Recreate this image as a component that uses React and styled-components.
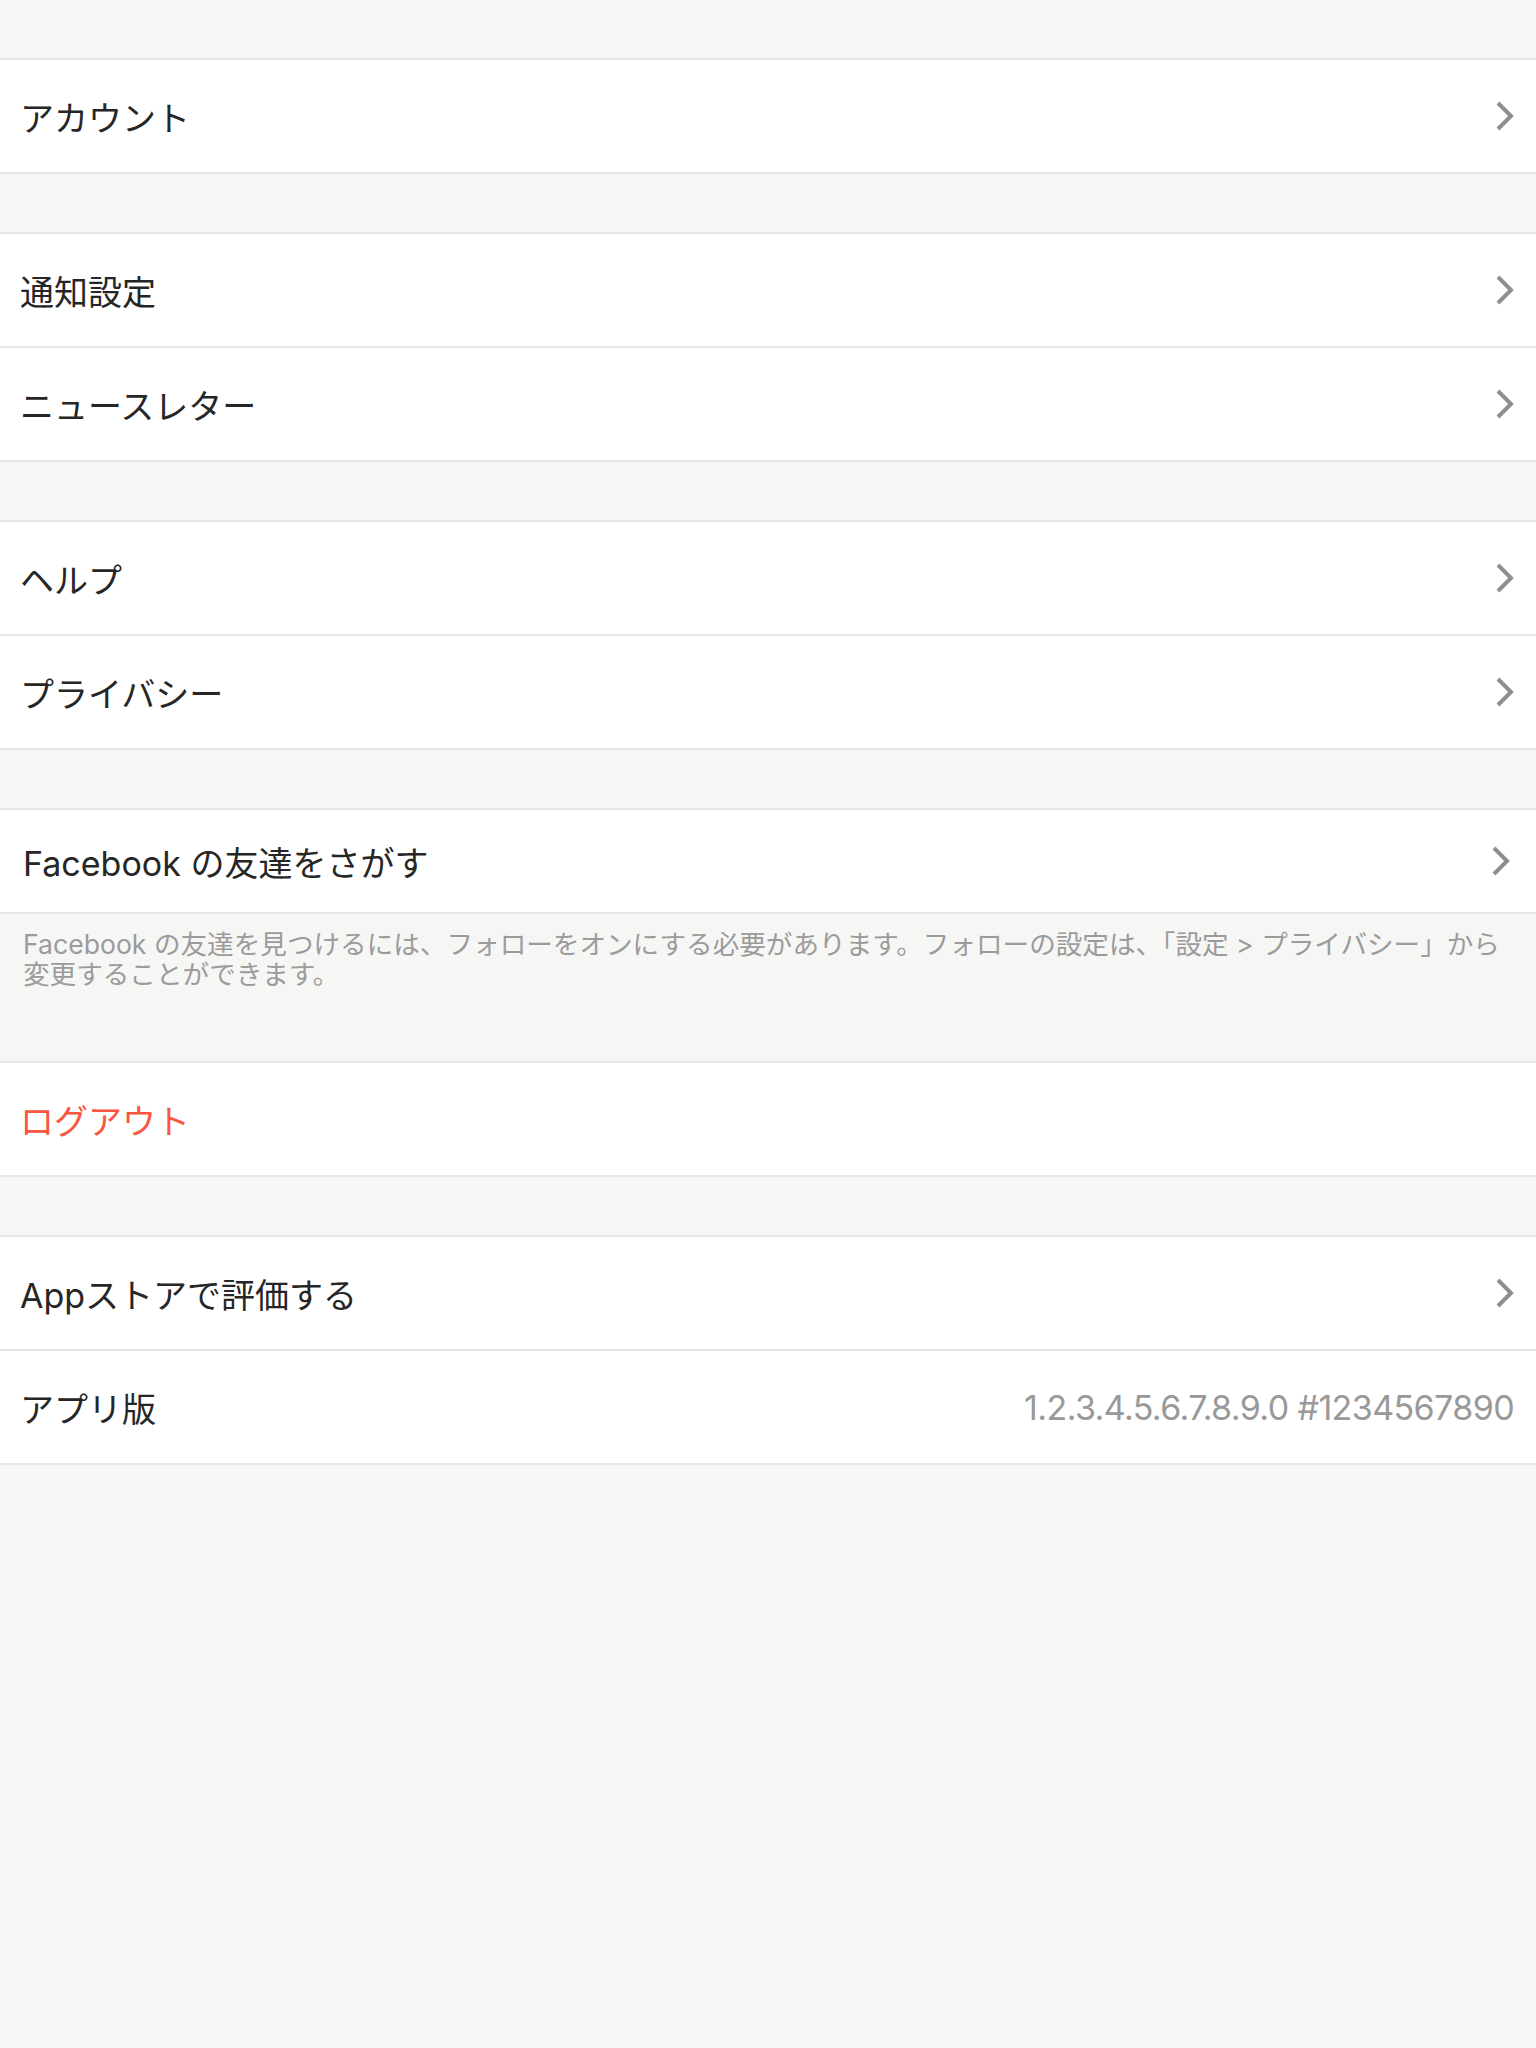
import React from "react";
import styled, { createGlobalStyle } from "styled-components";

const GlobalStyle = createGlobalStyle`
  body {
    margin: 0;
    background-color: #f6f6f4;
    font-family: "Inter", "Noto Sans CJK JP", sans-serif;
    color: #262626;
  }
`;

const Page = styled.div`
  min-height: 2048px;
  padding-top: 58px;
  box-sizing: border-box;
  background-color: #f6f6f4;
`;

const Group = styled.section`
  background-color: #ffffff;
  border-top: 2px solid #e6e6e6;
  border-bottom: 2px solid #e6e6e6;
  margin-bottom: ${props => (props.$flush ? "0" : "58px")};
`;

const Row = styled.div`
  height: ${props => props.$height || 112}px;
  display: flex;
  align-items: center;
  justify-content: space-between;
  padding: 0 22px 0 20px;
  cursor: pointer;

  & + & {
    border-top: 2px solid #e6e6e6;
  }
`;

const Label = styled.span`
  font-size: 34px;
  color: ${props => (props.$danger ? "#fa5540" : "#262626")};
  padding-left: ${props => props.$inset || 0}px;
`;

const Value = styled.span`
  font-size: 34px;
  color: #999999;
  letter-spacing: -0.6px;
`;

const Chevron = styled.svg`
  width: 18px;
  height: 30px;
  flex-shrink: 0;
  margin-right: ${props => props.$shift || 0}px;
`;

const Footer = styled.p`
  margin: 0;
  padding: 15px 23px 72px;
  font-size: 26.6px;
  line-height: 30px;
  color: #9b9b9b;
`;

function Arrow({ shift }) {
  return (
    <Chevron $shift={shift} viewBox="0 0 18 30">
      <polyline points="2,2 15,15 2,28" fill="none" stroke="#8e8e8e" strokeWidth="4" />
    </Chevron>
  );
}

export default function App() {
  return (
    <>
      <GlobalStyle />
      <Page>
        <Group>
          <Row>
            <Label>アカウント</Label>
            <Arrow />
          </Row>
        </Group>

        <Group>
          <Row>
            <Label>通知設定</Label>
            <Arrow />
          </Row>
          <Row>
            <Label>ニュースレター</Label>
            <Arrow />
          </Row>
        </Group>

        <Group>
          <Row>
            <Label>ヘルプ</Label>
            <Arrow />
          </Row>
          <Row>
            <Label>プライバシー</Label>
            <Arrow />
          </Row>
        </Group>

        <Group $flush>
          <Row $height={102}>
            <Label $inset={3}>Facebook の友達をさがす</Label>
            <Arrow shift={4} />
          </Row>
        </Group>
        <Footer>
          Facebook の友達を見つけるには、フォローをオンにする必要があります。フォローの設定は、「設定 &gt; プライバシー」から
          <br />
          変更することができます。
        </Footer>

        <Group>
          <Row>
            <Label $danger>ログアウト</Label>
          </Row>
        </Group>

        <Group>
          <Row>
            <Label>Appストアで評価する</Label>
            <Arrow />
          </Row>
          <Row>
            <Label>アプリ版</Label>
            <Value>1.2.3.4.5.6.7.8.9.0 #1234567890</Value>
          </Row>
        </Group>
      </Page>
    </>
  );
}
